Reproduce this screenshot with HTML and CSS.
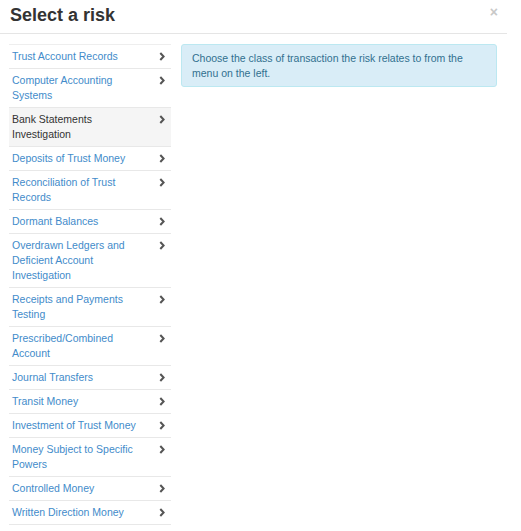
FILE: index.html
```html
<!DOCTYPE html>
<html>
<head>
<meta charset="utf-8">
<link rel="stylesheet" href="styles.css">
</head>
<body>
<div class="modal">
  <div class="modal-header">
    <h4 class="modal-title">Select a risk</h4>
    <button class="close" type="button">×</button>
  </div>
  <div class="modal-body">
    <ul class="risk-list">
      <li class="item"><span class="label">Trust Account Records</span><svg class="chev" viewBox="0 0 6 9"><polyline points="1.3,1 4.6,4.5 1.3,8"/></svg></li>
      <li class="item"><span class="label">Computer Accounting Systems</span><svg class="chev" viewBox="0 0 6 9"><polyline points="1.3,1 4.6,4.5 1.3,8"/></svg></li>
      <li class="item active"><span class="label">Bank Statements Investigation</span><svg class="chev" viewBox="0 0 6 9"><polyline points="1.3,1 4.6,4.5 1.3,8"/></svg></li>
      <li class="item"><span class="label">Deposits of Trust Money</span><svg class="chev" viewBox="0 0 6 9"><polyline points="1.3,1 4.6,4.5 1.3,8"/></svg></li>
      <li class="item"><span class="label">Reconciliation of Trust Records</span><svg class="chev" viewBox="0 0 6 9"><polyline points="1.3,1 4.6,4.5 1.3,8"/></svg></li>
      <li class="item"><span class="label">Dormant Balances</span><svg class="chev" viewBox="0 0 6 9"><polyline points="1.3,1 4.6,4.5 1.3,8"/></svg></li>
      <li class="item"><span class="label">Overdrawn Ledgers and Deficient Account Investigation</span><svg class="chev" viewBox="0 0 6 9"><polyline points="1.3,1 4.6,4.5 1.3,8"/></svg></li>
      <li class="item"><span class="label">Receipts and Payments Testing</span><svg class="chev" viewBox="0 0 6 9"><polyline points="1.3,1 4.6,4.5 1.3,8"/></svg></li>
      <li class="item"><span class="label">Prescribed/Combined Account</span><svg class="chev" viewBox="0 0 6 9"><polyline points="1.3,1 4.6,4.5 1.3,8"/></svg></li>
      <li class="item"><span class="label">Journal Transfers</span><svg class="chev" viewBox="0 0 6 9"><polyline points="1.3,1 4.6,4.5 1.3,8"/></svg></li>
      <li class="item"><span class="label">Transit Money</span><svg class="chev" viewBox="0 0 6 9"><polyline points="1.3,1 4.6,4.5 1.3,8"/></svg></li>
      <li class="item"><span class="label">Investment of Trust Money</span><svg class="chev" viewBox="0 0 6 9"><polyline points="1.3,1 4.6,4.5 1.3,8"/></svg></li>
      <li class="item"><span class="label">Money Subject to Specific Powers</span><svg class="chev" viewBox="0 0 6 9"><polyline points="1.3,1 4.6,4.5 1.3,8"/></svg></li>
      <li class="item"><span class="label">Controlled Money</span><svg class="chev" viewBox="0 0 6 9"><polyline points="1.3,1 4.6,4.5 1.3,8"/></svg></li>
      <li class="item"><span class="label">Written Direction Money</span><svg class="chev" viewBox="0 0 6 9"><polyline points="1.3,1 4.6,4.5 1.3,8"/></svg></li>
    </ul>
    <div class="alert">Choose the class of transaction the risk relates to from the menu on the left.</div>
  </div>
</div>
</body>
</html>
```
FILE: styles.css
```css
html, body {
  margin: 0;
  padding: 0;
  background: #fff;
}
body {
  font-family: "Liberation Sans", Arial, sans-serif;
  font-size: 10.5px;
  line-height: 15px;
  color: #333;
}
.modal {
  width: 507px;
}
.modal-header {
  height: 33px;
  border-bottom: 1px solid #e5e5e5;
  display: flex;
  align-items: flex-start;
  justify-content: space-between;
  box-sizing: content-box;
}
.modal-title {
  margin: 0;
  padding: 4px 0 0 10px;
  font-size: 18px;
  line-height: 22px;
  font-weight: bold;
  color: #333;
}
.close {
  border: 0;
  background: none;
  padding: 0;
  margin: 5px 9px 0 0;
  font-family: "Liberation Sans", Arial, sans-serif;
  font-size: 14px;
  line-height: 14px;
  font-weight: bold;
  color: #c8c8c8;
}
.modal-body {
  display: flex;
  align-items: flex-start;
  padding: 10px 10px 0 9px;
  gap: 10px;
}
.risk-list {
  list-style: none;
  margin: 0;
  padding: 0;
  width: 162px;
  flex: none;
  border-top: 1px solid #eee;
}
.item {
  display: flex;
  align-items: flex-start;
  padding: 4px 6px 4px 3px;
  border-bottom: 1px solid #e8e8e8;
  color: #428bca;
  gap: 14px;
}
.item.active {
  background: #f5f5f5;
  color: #333;
}
.label {
  flex: 1;
}
.chev {
  flex: none;
  width: 6px;
  height: 9px;
  margin-top: 3px;
  fill: none;
  stroke: #555;
  stroke-width: 2;
}
.alert {
  flex: 1;
  background: #d9edf7;
  border: 1px solid #bce8f1;
  border-radius: 3px;
  color: #31708f;
  padding: 6px 10px 5px;
}
```
